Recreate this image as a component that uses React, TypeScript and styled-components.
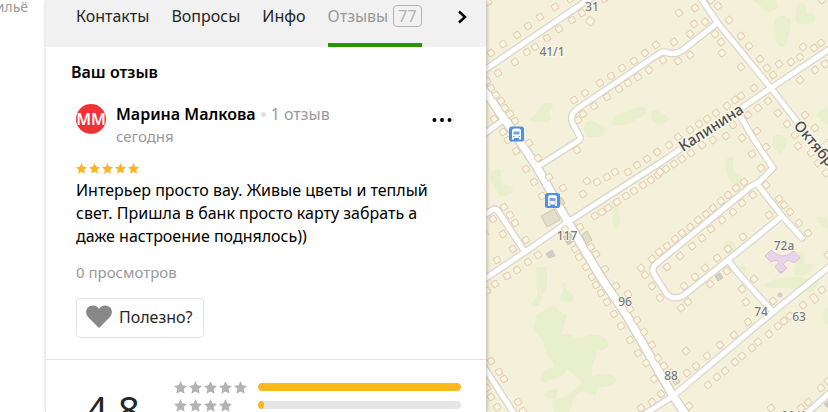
import React from "react";
import styled, { createGlobalStyle, css } from "styled-components";

const GlobalStyle = createGlobalStyle`
  *, *::before, *::after { box-sizing: border-box; }
  body {
    margin: 0;
    background: #fff;
    color: #000;
    font-family: "Noto Sans", "Open Sans", sans-serif;
    font-size: 16px;
    line-height: 22px;
  }
`;

const Page = styled.div`
  display: grid;
  grid-template-columns: 45px 441px minmax(0, 1fr);
  height: 100vh;
  overflow: hidden;
`;

const Aside = styled.aside`
  display: flex;
  justify-content: flex-end;
  align-items: flex-start;
  padding-right: 17px;
  overflow: hidden;
  white-space: nowrap;
  color: #999;
  font-size: 14px;
  line-height: 14px;
`;

const Panel = styled.main`
  z-index: 1;
  border-left: 1px solid #ebebeb;
  background: #fff;
  box-shadow: 1px 0 4px rgba(0, 0, 0, 0.25);
  overflow: hidden;
`;

const Tabs = styled.nav`
  display: flex;
  height: 47px;
  margin-left: -1px;
  padding: 0 16px 0 31px;
  gap: 22px;
  background: #f1f1f1;
`;

const Tab = styled.a<{ $active?: boolean }>`
  display: flex;
  align-items: flex-start;
  gap: 5px;
  padding-top: 5px;
  color: #262626;
  text-decoration: none;
  white-space: nowrap;
  border-bottom: 4px solid transparent;
  ${(p) => p.$active && css`
    color: #999;
    border-bottom-color: #2a9500;
  `}
`;

const Count = styled.span`
  padding: 0 4px;
  border: 1px solid #b3b3b3;
  border-radius: 4px;
  color: #b3b3b3;
  line-height: 20px;
`;

const IconButton = styled.button`
  display: flex;
  padding: 0;
  border: 0;
  background: none;
  color: #000;
  cursor: pointer;
`;

const NextButton = styled(IconButton)`
  align-self: flex-start;
  margin-left: auto;
  padding-top: 9px;
`;

const Review = styled.section`
  padding: 14px 31px 21px 30px;
  border-bottom: 1px solid #e3e3e3;
`;

const Title = styled.h2`
  margin: 0 0 20px -5px;
  font-size: 16px;
  line-height: 22px;
  font-weight: 600;
`;

const Author = styled.div`
  display: flex;
  align-items: flex-start;
`;

const Avatar = styled.div`
  display: flex;
  align-items: center;
  justify-content: center;
  flex: none;
  width: 30px;
  height: 30px;
  margin: 1px 10px 0 0;
  border-radius: 50%;
  overflow: hidden;
  background: #f43037;
  color: #fff;
  font-weight: 600;
`;

const Who = styled.div`
  flex: 1;
  color: #999;
  white-space: nowrap;
`;

const Name = styled.strong`
  color: #000;
  font-weight: 600;
`;

const Dot = styled.span`
  display: inline-block;
  width: 5px;
  height: 5px;
  margin: 0 5px 3px;
  border-radius: 50%;
  background: #e0e0e0;
`;

const When = styled.div`
  font-size: 15px;
`;

const MoreButton = styled(IconButton)`
  padding: 14px 3px 0 0;
`;

const StarBlock = styled.div`
  margin-top: 16px;
`;

const Stars = styled.div<{ $gap: number }>`
  display: flex;
  align-items: center;
  gap: ${(p) => p.$gap}px;
`;

const Body = styled.p`
  margin: 5px 0 13px;
  line-height: 23px;
`;

const Views = styled.div`
  margin-bottom: 15px;
  color: #999;
  font-size: 15px;
`;

const LikeButton = styled.button`
  display: inline-flex;
  align-items: center;
  gap: 7px;
  height: 40px;
  padding: 0 10px 2px 9px;
  border: 1px solid #e3e3e3;
  border-radius: 4px;
  background: #fff;
  color: #262626;
  font: inherit;
  cursor: pointer;
`;

const Summary = styled.section`
  display: flex;
  padding: 18px 25px 0 40px;
`;

const Score = styled.div`
  flex: none;
  width: 88px;
  padding-top: 9px;
  color: #262626;
  font-size: 38px;
  line-height: 44px;
`;

const Breakdown = styled.div`
  flex: 1;
  display: grid;
  grid-template-columns: 84px 1fr;
  grid-auto-rows: 18px;
  align-items: center;
`;

const Track = styled.div`
  height: 8px;
  border-radius: 4px;
  background: #e5e5e5;
  overflow: hidden;
`;

const Fill = styled.div`
  height: 100%;
  border-radius: 4px;
  background: #ffb81c;
`;

const MapArea = styled.section`
  overflow: hidden;
  background: #f5f0d9;
`;

const MapSvg = styled.svg`
  display: block;
  width: 100%;
  height: 100%;
`;

function StarRow({ count, size, gap, color }: { count: number; size: number; gap: number; color: string }) {
  return (
    <Stars $gap={gap} role="img" aria-label={`${count} из 5`}>
      {Array.from({ length: count }, (_, i) => (
        <svg key={i} width={size} height={size} viewBox="0 0 24 24" fill={color}>
          <path d="M12 0L15.600 8L24 9L17.800 14.800L19.600 23.500L12 19.200L4.400 23.500L6.200 14.800L0 9L8.400 8Z" />
        </svg>
      ))}
    </Stars>
  );
}

const GREENS = [
  "M529 118C535 117 537 112 541 106Q546 101 552 104L553 108Q547 112 551 118L549 122Q540 123 529 121Z",
  "M612 122Q614 114 625 112Q640 105 646 108Q648 115 635 120Q626 127 612 125Z",
  "M585 123Q592 118 598 124L605 128Q606 132 600 137H587Q582 131 585 123Z",
  "M652 111Q660 109 669 118Q667 124 657 124Q649 122 652 111Z",
  "M752 0H776Q780 8 775 10Q768 14 763 9Q759 4 752 0Z",
  "M797 4Q804 1 806 7V13Q817 12 815 20Q810 27 805 23Q797 26 795 19Z",
  "M775 18Q784 12 791 20Q791 33 785 46Q780 49 776 42Q773 30 775 18Z",
  "M828 108Q818 108 817 116L828 127Z",
  "M492 171Q497 167 501 171Q500 180 503 185Q512 185 513 190Q510 197 500 196Q494 188 490 179Z",
  "M610 202L620 197Q617 207 619 214Q623 225 616 229Q611 227 613 216Q615 211 610 202Z",
  "M726 160Q729 155 734 158Q730 170 740 175Q745 180 741 186Q731 185 728 178Q724 168 726 160Z",
  "M773 136Q781 133 787 139L785 148L780 155L773 147Z",
  "M724 242Q730 238 735 244L738 250L732 255Q723 251 724 242Z",
  "M537 267H547V286Q542 294 540 304Q535 309 531 304L538 294L536 284Z",
  "M562 283Q566 281 566 289L572 294Q576 299 571 302Q561 303 559 299L563 291Z",
  "M537 314L546 310Q553 302 559 311L567 315Q565 325 561 334L570 334Q580 342 586 336Q606 332 609 345Q605 350 598 351L592 366V377Q609 370 617 379Q614 387 598 387L595 396L589 393Q582 388 575 397L569 412H554L553 398Q543 400 544 393L556 388Q559 393 555 400Q566 397 573 391L582 382L567 369Q562 380 550 379Q543 387 540 379Q541 370 554 367Q554 361 546 354L543 341L533 329Z",
  "M763 286Q772 277 786 278Q800 275 804 278L820 280Q815 289 810 293L789 288L777 288Q765 289 763 286Z",
  "M799 252L804 253V264H813Q814 270 804 276L793 275Z",
  "M818 217Q826 215 828 223V229L817 221Z",
  "M828 307Q821 311 823 321L828 325Z",
  "M732 266L746 266L745 276H736Z",
  "M536 268Q544 265 547 270V275H537Z",
];

const LOCAL_ROADS = [
  "M480 73L592 -3",
  "M503 120L480 137",
  "M537 167L578 141Q582 139 579 135L573 124Q569 115 577 109L660 53Q664 51 668 53Q676 55 683 50L717 23",
  "M700 -3L717 22L771 88L798 123",
  "M834 46L771 88L660 163L568 222L525 252L480 282",
  "M480 218L492 210Q496 208 498 211L525 252",
  "M738 112L753 138L773 168L759 182Q755 184 750 187L656 264Q651 268 654 274L666 293Q672 301 683 296L728 260L782 216",
  "M758 185L782 216L802 238",
  "M728 260L737 272L773 312",
  "M834 263L773 312L673 396L645 414",
  "M834 389L808 412",
  "M480 361L515 415",
];
const MAIN_ROAD = "M480 84L503 117L517 137L537 167L568 222L600 276L627 316L673 396L687 416";

const HOUSES: [number, number][] = [
  [491,53],[503,44],[517,35],[528,26],[540,17],[555,7],[488,2],[570,-1],[604,-1],[582,13],[572,20],[559,29],[547,38],[535,47],[527,52],[515,62],[498,73],[487,81],
  [491,88],[496,95],[501,101],[505,108],[510,114],[515,121],[494,119],[503,132],[574,100],[585,93],[600,83],[611,76],[622,68],[634,61],[645,53],[656,45],
  [649,70],[638,77],[628,83],[619,89],[607,97],[594,106],[583,114],[578,120],[674,42],[690,34],[694,24],[705,22],[679,13],[695,8],[718,6],[729,20],[741,36],[749,46],[715,34],[721,42],[722,53],[741,67],
  [663,60],[678,61],[690,55],[711,0],[760,59],[767,68],[773,75],[779,64],[791,62],[800,57],[803,47],[814,48],[821,43],[815,70],[825,64],[800,80],[754,88],[741,96],[735,100],[727,106],[716,113],[707,119],[699,124],[690,130],[678,137],[748,115],[758,108],[768,101],[733,125],[726,136],[757,131],[742,138],[778,113],[787,124],[795,135],[805,115],[815,128],[822,0],
  [508,140],[516,151],[529,143],[538,158],[526,169],[534,182],[549,177],[563,188],[542,196],[577,150],[587,181],[583,194],[597,182],[607,177],[615,172],[628,172],[637,165],[647,159],[657,152],
  [658,175],[651,180],[643,185],[634,191],[626,196],[617,202],[608,208],[602,212],[595,216],[580,227],[504,207],[510,215],[515,223],[493,219],[503,234],[526,240],[513,249],[497,260],[538,255],[528,262],[517,270],[507,276],[495,284],[487,291],
  [565,229],[575,249],[579,257],[586,267],[591,247],[596,254],[605,269],[592,277],[596,285],[601,293],[607,302],[614,314],[621,326],[630,340],[638,353],[646,363],[654,379],[616,286],[628,294],[630,309],[637,320],[644,332],[652,345],[658,358],[664,366],[671,373],
  [641,268],[652,286],[645,275],[660,298],[669,145],[660,172],[666,169],[674,164],[682,159],[691,153],[702,145],[713,140],[752,154],[766,147],[761,168],[744,182],[736,188],[728,195],[721,201],[713,208],[706,214],[698,220],[690,227],[682,233],[675,239],[667,246],[659,252],[652,259],[766,185],[779,199],[784,205],[790,212],[799,223],[808,233],[753,195],[742,203],[733,212],[722,220],[711,229],[702,238],[692,246],[680,256],[667,267],[769,215],[743,237],[728,249],[717,258],[705,268],[727,271],
  [684,286],[695,277],[710,284],[688,302],[681,308],[742,289],[754,279],[746,302],[773,301],[748,322],[734,335],[720,345],[707,356],[686,351],[696,366],[687,373],[803,305],[790,316],[784,321],[778,326],[769,334],[758,342],[752,348],[742,356],[735,362],[725,371],[717,377],[708,385],[689,406],[661,394],[652,402],[641,408],[771,408],[801,408],[808,402],[821,388],[828,381],[822,290],[828,255],[491,361],[499,372],[504,379],[487,388],[491,397],[497,407],[518,402],[523,411],[798,146],[811,153],[818,163],[826,173],
];

function Bus({ x, y }: { x: number; y: number }) {
  return (
    <g transform={`translate(${x} ${y})`}>
      <rect x="-7.5" y="-7.5" width="15" height="15" rx="2.5" fill="#4d91e5" />
      <path d="M-4.500 5.500V-3Q-4.500 -5.500 -2 -5.500H2Q4.500 -5.500 4.500 -3V5.500H2.500V4H-2.500V5.500Z" fill="#fff" />
      <path d="M-3 -2.500H3V0.500H-3Z" fill="#6ea5e8" />
      <path d="M-3.500 2.500H-2M2 2.500H3.500" stroke="#6ea5e8" />
    </g>
  );
}

const NUMBERS: [string, number, number][] = [
  ["31", 592, 11], ["41/1", 552, 56], ["117", 567, 240], ["96", 625, 306],
  ["88", 671, 380], ["74", 761, 316], ["63", 799, 321], ["72a", 784, 250], ["90/1", 794, 420],
];

function StreetMap() {
  return (
    <MapSvg viewBox="486 0 342 412" preserveAspectRatio="xMinYMin slice" role="img" aria-label="Карта">
      <g fill="#e8efcd">{GREENS.map((d) => <path key={d} d={d} />)}</g>
      <path d="M487 231L489 235M821 145L828 139" stroke="#d8d4ca" />
      <g fill="none" strokeLinejoin="round" strokeLinecap="round">
        <g stroke="#d9d6cf" strokeWidth="7.5">{LOCAL_ROADS.map((d) => <path key={d} d={d} />)}</g>
        <path d={MAIN_ROAD} stroke="#d3d1cc" strokeWidth="10" />
        <g stroke="#fff" strokeWidth="5">{LOCAL_ROADS.map((d) => <path key={d} d={d} />)}</g>
        <path d={MAIN_ROAD} stroke="#fff" strokeWidth="7.5" />
      </g>
      <g fill="#fdf3de" stroke="#ddcfb6" strokeWidth="1">
        {HOUSES.map(([x, y]) => (
          <rect key={`${x}-${y}`} x={x - 3} y={y - 3} width="6" height="6" rx="1" transform={`rotate(${x > 640 ? -38 : -32} ${x} ${y})`} />
        ))}
        <rect x="587" y="18" width="7" height="7" rx="1" transform="rotate(40 591 21)" />
        <rect x="811" y="294" width="6" height="9" rx="1" transform="rotate(-38 814 298)" />
      </g>
      <g fill="#e2dcca" stroke="#cfc8b5">
        <path d="M541 216L554 209L560 220L547 227Z" />
        <path d="M561 197L565 203L563 205L560 204Z" />
        <path d="M582 235L587 231L592 240L586 244Z" />
        <path d="M563 237L570 232L575 240L568 245Z" fill="#d1cfcb" />
        <path d="M546 254L552 250L555 256L549 258Z" fill="#cfcccb" />
        <path d="M715 276L720 273L723 278L718 281Z" fill="#cfcccb" />
        <path d="M673 381L678 379L680 382L675 385Z" />
        <circle cx="780" cy="295" r="2" fill="#cfcccb" />
        <path d="M824 404L828 401V408Z" fill="#c9c7c7" />
      </g>
      <g fill="#e8d4ea" stroke="#d8c2d8">
        <path d="M765 256L771 250L776 254L782 256L788 255L794 251L800 258L794 263L788 260L783 264L787 268L781 273L775 267L779 262L776 260L771 262Z" />
        <path d="M781 243L784 240L787 243L784 247Z" />
      </g>
      <path d="M778 271L781 274L784 271Z" fill="#d9bedb" />
      <Bus x={516.5} y={134} />
      <Bus x={552.5} y={200.5} />
      <g
        fontFamily="Noto Sans, sans-serif" fontSize="12" fontWeight="500" fill="#7d7d7d" textAnchor="middle"
        stroke="#faf7ec" strokeWidth="2" strokeLinejoin="round" paintOrder="stroke"
      >
        {NUMBERS.map(([t, x, y]) => <text key={t} x={x} y={y}>{t}</text>)}
        <g fontSize="15" fill="#4d4d4d" textAnchor="start" strokeWidth="3">
          <text transform="translate(683 152) rotate(-33)">Калинина</text>
          <text transform="translate(793 126) rotate(50)">Октябрьская</text>
        </g>
      </g>
    </MapSvg>
  );
}

const BREAKDOWN = [
  { stars: 5, share: 100 },
  { stars: 4, share: 3 },
];

export default function App() {
  return (
    <>
      <GlobalStyle />
      <Page>
        <Aside>Жильё</Aside>
        <Panel>
          <Tabs>
            <Tab href="#contacts">Контакты</Tab>
            <Tab href="#questions">Вопросы</Tab>
            <Tab href="#info">Инфо</Tab>
            <Tab href="#reviews" $active>Отзывы <Count>77</Count></Tab>
            <NextButton aria-label="Дальше">
              <svg width="16" height="16" viewBox="0 0 16 16" fill="none" stroke="currentColor" strokeWidth="2.5">
                <path d="M5 2.500L11 8L5 13.500" />
              </svg>
            </NextButton>
          </Tabs>
          <Review>
            <Title>Ваш отзыв</Title>
            <Author>
              <Avatar>ММ</Avatar>
              <Who>
                <Name>Марина Малкова</Name><Dot />1 отзыв
                <When>сегодня</When>
              </Who>
              <MoreButton aria-label="Ещё">
                <svg width="20" height="6" viewBox="0 0 20 6">
                  <circle cx="2.5" cy="3" r="2" /><circle cx="10" cy="3" r="2" /><circle cx="17.5" cy="3" r="2" />
                </svg>
              </MoreButton>
            </Author>
            <StarBlock>
              <StarRow count={5} size={11} gap={2} color="#ffb320" />
            </StarBlock>
            <Body>Интерьер просто вау. Живые цветы и теплый свет. Пришла в банк просто карту забрать а даже настроение поднялось))</Body>
            <Views>0 просмотров</Views>
            <LikeButton>
              <svg width="26" height="24" viewBox="0 0 26 24" fill="#888">
                <path d="M13 23L2.500 12.500Q0 9.500 0 7Q0.500 0.500 7 0.500Q11 0.500 13 4Q15 0.500 19 0.500Q25.500 0.500 26 7Q26 9.500 23.500 12.500Z" />
              </svg>
              Полезно?
            </LikeButton>
          </Review>
          <Summary>
            <Score>4.8</Score>
            <Breakdown>
              {BREAKDOWN.map((row) => (
                <React.Fragment key={row.stars}>
                  <StarRow count={row.stars} size={13} gap={2} color="#b3b3b3" />
                  <Track><Fill style={{ width: `${row.share}%` }} /></Track>
                </React.Fragment>
              ))}
            </Breakdown>
          </Summary>
        </Panel>
        <MapArea><StreetMap /></MapArea>
      </Page>
    </>
  );
}
